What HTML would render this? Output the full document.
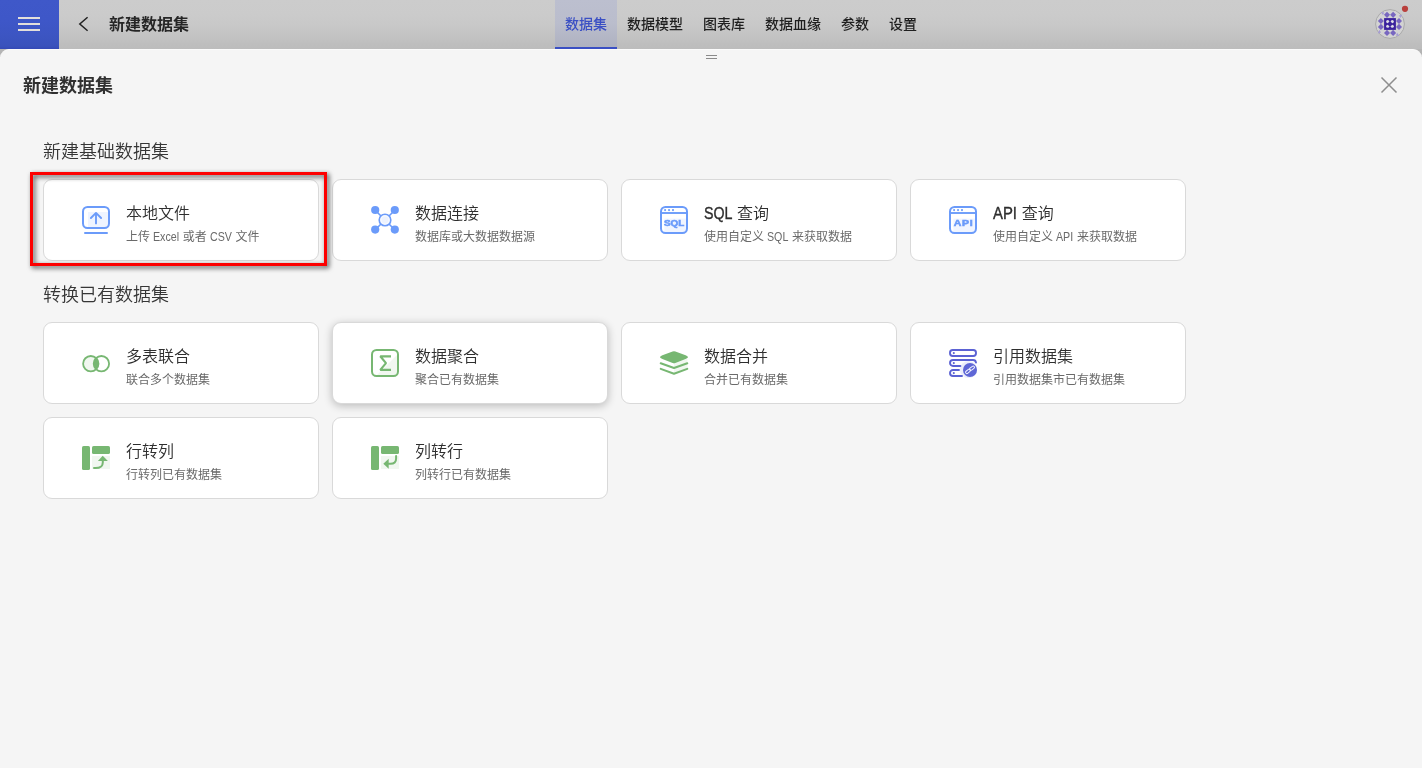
<!DOCTYPE html>
<html lang="zh-CN">
<head>
<meta charset="utf-8">
<title>新建数据集</title>
<style>
*{box-sizing:border-box;margin:0;padding:0}
html,body{width:1422px;height:768px;overflow:hidden}
body{position:relative;background:#f5f5f5;font-family:"Liberation Sans","Noto Sans CJK SC",sans-serif;color:#333}
.abs{position:absolute}
#wrap{position:absolute;left:0;top:0;width:1422px;height:768px;overflow:hidden;transform:translateZ(0);will-change:transform}
#topbar{position:absolute;left:0;top:0;width:1422px;height:57px;background:linear-gradient(to bottom,#cccccc 0px,#cbcbcb 14px,#c8c8c8 26px,#c3c3c3 36px,#bebebe 44px,#bcbcbc 49px,#b6b6b6 49px,#b0b0b0 57px)}
#menu{position:absolute;left:0;top:0;width:59px;height:49px;background:linear-gradient(to bottom,#3f58c9 0px,#3e57c8 20px,#3c55c2 36px,#3a52bc 46px,#3449b6 49px)}
#menu i{position:absolute;left:18px;width:22px;height:2px;background:#e3dfdb}
#modal{position:absolute;left:0;top:49px;width:1422px;height:719px;background:#f5f5f5;border-radius:9px 9px 0 0;border-top:1px solid #fbfbfb}
.navt{position:absolute;top:0;height:49px;line-height:48px;font-size:14px;font-weight:500;color:#1f1f1f;white-space:nowrap}
#tabact{position:absolute;left:555px;top:0;width:62px;height:49px;background:linear-gradient(to bottom,#bcbfcf 0,#babdcc 24px,#b2b5c4 40px,#adb0be 49px);border-bottom:2px solid #3a4fc4}
.h1{position:absolute;white-space:nowrap;font-weight:700;color:#303030}
.sec{position:absolute;left:43px;font-weight:350;font-size:18px;line-height:24px;color:#363636;white-space:nowrap}
.card{position:absolute;width:276px;height:82px;background:#fff;border:1px solid #d9d9d9;border-radius:9px}
.card.hov{box-shadow:0 2px 8px rgba(0,0,0,.24)}
.card svg{position:absolute;left:36px;top:24px;width:32px;height:32px;overflow:visible}
.card .t{position:absolute;left:82px;top:22px;font-weight:350;font-size:16px;line-height:24px;color:#2e2e2e;white-space:nowrap}
.card .d{position:absolute;left:82px;top:48px;font-weight:400;font-size:12px;line-height:18px;color:#6a6a6a;white-space:nowrap}
.l{display:inline-block;transform:scaleX(.89);transform-origin:0 50%}
.t .l{-webkit-text-stroke:.35px #2e2e2e}
#redbox{position:absolute;left:30px;top:172px;width:297px;height:94px;border:3px solid #fd0000;filter:drop-shadow(2px 2px 2.6px rgba(0,0,0,.72))}
</style>
</head>
<body>
<div id="wrap">
<div id="topbar"></div>
<div id="menu"><i style="top:17px"></i><i style="top:23px"></i><i style="top:29px"></i></div>
<svg class="abs" style="left:76px;top:14px" width="16" height="20" viewBox="0 0 16 20"><path d="M11.6 3.3 L3.8 10 L11.6 16.7" fill="none" stroke="#222" stroke-width="1.5"/></svg>
<div class="h1" style="left:109px;top:13px;font-size:16px;line-height:24px;font-weight:700;color:#262626">新建数据集</div>

<div id="tabact"></div>
<div class="navt" style="left:565px;color:#3a4fc4">数据集</div>
<div class="navt" style="left:627px">数据模型</div>
<div class="navt" style="left:703px">图表库</div>
<div class="navt" style="left:765px">数据血缘</div>
<div class="navt" style="left:841px">参数</div>
<div class="navt" style="left:889px">设置</div>

<!-- avatar -->
<svg class="abs" style="left:1370px;top:0" width="52" height="49" viewBox="0 0 52 49" id="avatar"><circle cx="20" cy="24" r="14.4" fill="#d3d3d3" stroke="#a9a9a9" stroke-width="1"/><g fill="#7867c0"><path d="M17 11.7L20 14.8L17 17.9L14 14.8Z"/><path d="M23.1 11.7L26.1 14.8L23.1 17.9L20.1 14.8Z"/><path d="M17 29.8L20 32.9L17 36L14 32.9Z"/><path d="M23.1 29.8L26.1 32.9L23.1 36L20.1 32.9Z"/><path d="M10.9 17.9L13.9 21L10.9 24.1L7.9 21Z"/><path d="M10.9 23.8L13.9 26.9L10.9 30L7.9 26.9Z"/><path d="M29 17.9L32 21L29 24.1L26 21Z"/><path d="M29 23.8L32 26.9L29 30L26 26.9Z"/></g><g fill="#a59bd6"><path d="M10.9 11.9L14.3 12.4L13 15.3Z"/><path d="M32.3 14.6L30.5 18.1L28.9 15.5Z"/><path d="M7.9 33.4L9.3 29.8L11 32.4Z"/><path d="M29.3 36.1L25.8 35.6L27.2 32.8Z"/></g><rect x="14.1" y="18.1" width="11.8" height="11.8" fill="#3a219d"/><g fill="#dedde6"><circle cx="17.7" cy="21.6" r="1.55"/><circle cx="22.3" cy="21.6" r="1.55"/><circle cx="17.7" cy="26.3" r="1.55"/><circle cx="22.3" cy="26.3" r="1.55"/></g><path d="M18.4 22.3H21.6V25.6H18.4Z" fill="#3a219d"/><circle cx="35" cy="8.8" r="3.1" fill="#b9403d"/></svg>

<div id="modal"></div>
<div class="abs" style="left:706px;top:55px;width:11px;height:1px;background:#8a8a8a"></div>
<div class="abs" style="left:706px;top:58px;width:11px;height:1px;background:#8a8a8a"></div>
<div class="h1" style="left:23px;top:73px;font-size:18px;line-height:26px">新建数据集</div>
<svg class="abs" style="left:1380px;top:76px" width="18" height="18" viewBox="0 0 18 18"><path d="M1.5 1.5 L16.5 16.5 M16.5 1.5 L1.5 16.5" fill="none" stroke="#8e8e8e" stroke-width="1.5"/></svg>

<div class="sec" style="top:140px">新建基础数据集</div>
<div class="sec" style="top:283px">转换已有数据集</div>

<div class="card" style="left:43px;top:179px"><svg viewBox="0 0 32 32" id="ic1"><rect x="8" y="8" width="20" height="15" fill="#eff4ff"/><rect x="3" y="3" width="26" height="21" rx="4.5" fill="none" stroke="#6b9bfa" stroke-width="2"/><path d="M5 29H27" stroke="#6b9bfa" stroke-width="2" stroke-linecap="round"/><path d="M16 19.4V9.2M10.9 14L16 8.9L21.1 14" fill="none" stroke="#6b9bfa" stroke-width="1.9" stroke-linecap="round" stroke-linejoin="round"/></svg><div class="t">本地文件</div><div class="d">上传 <span class="l" style="margin-right:-.269em">Excel</span> 或者 <span class="l" style="margin-right:-.226em">CSV</span> 文件</div></div>
<div class="card" style="left:332px;top:179px"><svg viewBox="0 0 32 32" id="ic2"><path d="M6 6L26 26M26 6L6 26" stroke="#6b9bfa" stroke-width="1.6"/><circle cx="6.2" cy="6" r="4.1" fill="#6b9bfa"/><circle cx="25.8" cy="6" r="4.1" fill="#6b9bfa"/><circle cx="6.2" cy="25.6" r="4.1" fill="#6b9bfa"/><circle cx="25.8" cy="25.6" r="4.1" fill="#6b9bfa"/><circle cx="16" cy="16" r="5.8" fill="#f6f9ff" stroke="#6b9bfa" stroke-width="1.6"/><circle cx="16" cy="16" r="3.4" fill="#edf2fe"/></svg><div class="t">数据连接</div><div class="d">数据库或大数据数据源</div></div>
<div class="card" style="left:621px;top:179px"><svg viewBox="0 0 32 32" id="ic3"><rect x="6.4" y="14.6" width="21.6" height="13.4" fill="#f1f5ff"/><rect x="3" y="3" width="26" height="26" rx="4.5" fill="none" stroke="#6b9bfa" stroke-width="2"/><path d="M3 9H29" stroke="#6b9bfa" stroke-width="1.9"/><circle cx="7.1" cy="6.1" r="1.05" fill="#6b9bfa"/><circle cx="11.05" cy="6.1" r="1.05" fill="#6b9bfa"/><circle cx="15" cy="6.1" r="1.05" fill="#6b9bfa"/><text transform="translate(16.1 21.7) scale(1.02 1)" text-anchor="middle" font-family="Liberation Sans, sans-serif" font-weight="700" font-size="9.7" fill="#6b9bfa" stroke="#6b9bfa" stroke-width="0.6">SQL</text></svg><div class="t"><span class="l" style="margin-right:-.22em">SQL</span> 查询</div><div class="d">使用自定义 <span class="l" style="margin-right:-.22em">SQL</span> 来获取数据</div></div>
<div class="card" style="left:910px;top:179px"><svg viewBox="0 0 32 32" id="ic4"><rect x="6.4" y="14.6" width="21.6" height="13.4" fill="#f1f5ff"/><rect x="3" y="3" width="26" height="26" rx="4.5" fill="none" stroke="#6b9bfa" stroke-width="2"/><path d="M3 9H29" stroke="#6b9bfa" stroke-width="1.9"/><circle cx="7.1" cy="6.1" r="1.05" fill="#6b9bfa"/><circle cx="11.05" cy="6.1" r="1.05" fill="#6b9bfa"/><circle cx="15" cy="6.1" r="1.05" fill="#6b9bfa"/><text transform="translate(16.5 22.2) scale(1.13 1)" text-anchor="middle" font-family="Liberation Sans, sans-serif" font-weight="700" font-size="9.3" letter-spacing="0.6" fill="#6b9bfa" stroke="#6b9bfa" stroke-width="0.6">API</text></svg><div class="t"><span class="l" style="transform:scaleX(.93);margin-right:-.09em">API</span> 查询</div><div class="d">使用自定义 <span class="l" style="margin-right:-.177em">API</span> 来获取数据</div></div>

<div class="card" style="left:43px;top:322px"><svg viewBox="0 0 32 32" id="ic5"><circle cx="10.8" cy="16.7" r="7.7" fill="#f1f7f0"/><path d="M16.1 11.1A7.7 7.7 0 0 1 16.1 22.3A7.7 7.7 0 0 1 16.1 11.1Z" fill="#77b772"/><circle cx="10.8" cy="16.7" r="7.7" fill="none" stroke="#77b772" stroke-width="1.8"/><circle cx="21.4" cy="16.7" r="7.7" fill="none" stroke="#77b772" stroke-width="1.8"/></svg><div class="t">多表联合</div><div class="d">联合多个数据集</div></div>
<div class="card hov" style="left:332px;top:322px"><svg viewBox="0 0 32 32" id="ic6"><path d="M28 8V28H8Z" fill="#f1f7f0"/><rect x="3" y="3" width="26" height="26" rx="4.5" fill="none" stroke="#77b772" stroke-width="2"/><path d="M22 9.3H11.3L17 16.1L11.3 22.9H22" fill="none" stroke="#77b772" stroke-width="2.2" stroke-linejoin="bevel"/></svg><div class="t">数据聚合</div><div class="d">聚合已有数据集</div></div>
<div class="card" style="left:621px;top:322px"><svg viewBox="0 0 32 32" id="ic7"><path d="M16 16.6L29.4 11.8V21.8L16 26.6Z" fill="#f1f7f0"/><path d="M14.6 4.4Q16 3.85 17.4 4.4L27.6 8.3Q32.4 10.2 27.6 12.1L17.4 16Q16 16.55 14.6 16L4.4 12.1Q-0.4 10.2 4.4 8.3Z" fill="#77b772"/><path d="M2.7 16.3L16 21L29.3 16.3" fill="none" stroke="#77b772" stroke-width="2" stroke-linecap="round" stroke-linejoin="round"/><path d="M2.7 21.9L16 26.7L29.3 21.9" fill="none" stroke="#77b772" stroke-width="2" stroke-linecap="round" stroke-linejoin="round"/></svg><div class="t">数据合并</div><div class="d">合并已有数据集</div></div>
<div class="card" style="left:910px;top:322px"><svg viewBox="0 0 32 32" id="ic8"><circle cx="21.5" cy="22.5" r="8.6" fill="#eceefb"/><rect x="3" y="3" width="26" height="6" rx="2.7" fill="none" stroke="#5b62d4" stroke-width="1.9"/><path d="M13.4 19H6A3 3 0 0 1 6 13H26A3 3 0 0 1 29 15.6" fill="none" stroke="#5b62d4" stroke-width="1.9" stroke-linecap="round"/><path d="M12 23H6A3 3 0 0 0 6 29H15" fill="none" stroke="#5b62d4" stroke-width="1.9" stroke-linecap="round"/><circle cx="6.8" cy="6.1" r="1.05" fill="#5b62d4"/><circle cx="6.8" cy="16.1" r="1.05" fill="#5b62d4"/><circle cx="6.8" cy="26.1" r="1.05" fill="#5b62d4"/><circle cx="23" cy="23" r="7" fill="#5f67d6"/><g transform="rotate(-38 23 22.8)" fill="none" stroke="#f3f4fd" stroke-width="1"><rect x="17.7" y="21.5" width="5.6" height="2.6" rx="1.3"/><rect x="22.7" y="21.5" width="5.6" height="2.6" rx="1.3"/></g></svg><div class="t">引用数据集</div><div class="d">引用数据集市已有数据集</div></div>

<div class="card" style="left:43px;top:417px"><svg viewBox="0 0 32 32" id="ic9"><rect x="12" y="14" width="18" height="13" fill="#f1f7f0"/><rect x="2" y="4" width="8" height="24" rx="1.6" fill="#77b772"/><rect x="12" y="4" width="18" height="8" rx="1.6" fill="#77b772"/><path d="M22.7 13.7L27.9 18.9H17.9Z" fill="#77b772"/><path d="M22.8 18.5V20.4C22.8 24.6 20.3 26 15.6 26.1H14" fill="none" stroke="#77b772" stroke-width="2" stroke-linecap="round"/></svg><div class="t">行转列</div><div class="d">行转列已有数据集</div></div>
<div class="card" style="left:332px;top:417px"><svg viewBox="0 0 32 32" id="ic10"><rect x="12" y="14" width="18" height="13" fill="#f1f7f0"/><rect x="2" y="4" width="8" height="24" rx="1.6" fill="#77b772"/><rect x="12" y="4" width="18" height="8" rx="1.6" fill="#77b772"/><path d="M14.3 21.8L19.7 16.8V26.8Z" fill="#77b772"/><path d="M27.1 14V16.4C27.1 20.4 25 21.8 21.4 21.8H19.5" fill="none" stroke="#77b772" stroke-width="2" stroke-linecap="round"/></svg><div class="t">列转行</div><div class="d">列转行已有数据集</div></div>

<div id="redbox"></div>
</div>
</body>
</html>
